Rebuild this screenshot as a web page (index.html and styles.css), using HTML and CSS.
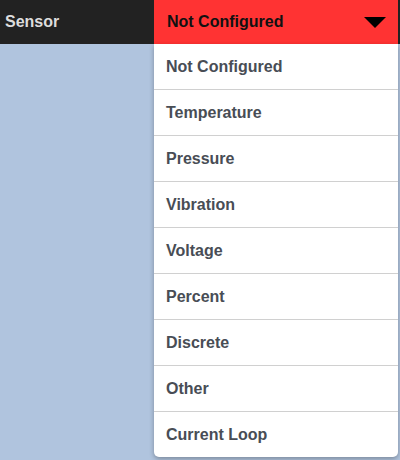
FILE: index.html
```html
<!DOCTYPE html>
<html>
<head>
  <title>Sensor</title>
  <link rel="stylesheet" href="styles.css">
</head>
<body>
  <div class="barra">
    <span class="etiqueta">Sensor</span>
    <div class="selector">
      <div class="actual">
        <span>Not Configured</span>
        <span class="flecha"></span>
      </div>
      <ul class="opciones">
        <li>Not Configured</li>
        <li>Temperature</li>
        <li>Pressure</li>
        <li>Vibration</li>
        <li>Voltage</li>
        <li>Percent</li>
        <li>Discrete</li>
        <li>Other</li>
        <li>Current Loop</li>
      </ul>
    </div>
  </div>
</body>
</html>
```

FILE: styles.css
```css
body {
  margin: 0;
  font-family: "Liberation Sans", Arial, sans-serif;
  background-color: #b0c4de;
  height: 460px;
  overflow: hidden;
}

.barra {
  display: flex;
  justify-content: space-between;
  align-items: flex-start;
  height: 44px;
  background-color: #222222;
}

.etiqueta {
  color: #dddddd;
  font-size: 16px;
  font-weight: bold;
  padding: 13px 0 0 5px;
}

.selector {
  width: 244px;
  margin-right: 2px;
  position: relative;
}

.actual {
  display: flex;
  justify-content: space-between;
  align-items: center;
  height: 44px;
  padding: 0 12px 0 13px;
  box-sizing: border-box;
  background-color: #ff3333;
  color: #111111;
  font-size: 16px;
  font-weight: bold;
}

.flecha {
  width: 0;
  height: 0;
  border-left: 11px solid transparent;
  border-right: 11px solid transparent;
  border-top: 11px solid #000000;
}

.opciones {
  list-style: none;
  margin: 0;
  padding: 0;
  background-color: white;
  border-radius: 0 0 5px 5px;
  box-shadow: 0 2px 5px rgba(0, 0, 0, 0.3);
}

.opciones li {
  height: 45px;
  line-height: 45px;
  padding-left: 12px;
  border-bottom: 1px solid #d0d0d0;
  color: #484d55;
  font-size: 16px;
  font-weight: bold;
}

.opciones li:last-child {
  border-bottom: none;
}
```
